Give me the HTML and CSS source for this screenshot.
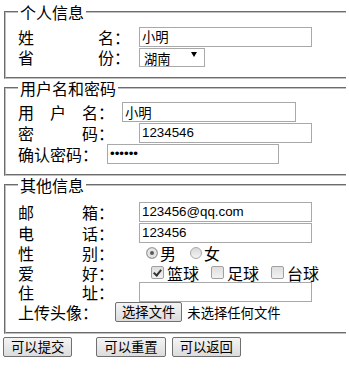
FILE: index.html
```html
<!DOCTYPE html>
<html lang="zh-CN">
<head>
  <meta charset="UTF-8" />
  <meta name="viewport" content="width=device-width, initial-scale=1.0"/>
  <title>用户注册</title>
  <link rel="stylesheet" href="styles.css">
</head>
<body>
  <form>
    <fieldset class="box box-one">
      <legend>个人信息</legend>
      <div class="row r21">
        <span class="head"><span class="key w96">姓名</span>：</span>
        <input class="txt" type="text" value="小明">
      </div>
      <div class="row r20">
        <span class="head"><span class="key w96">省份</span>：</span>
        <span class="sel">
          <select>
            <option>湖南</option>
            <option>湖北</option>
            <option>广东</option>
          </select>
        </span>
      </div>
    </fieldset>

    <fieldset class="box box-two">
      <legend>用户名和密码</legend>
      <div class="row r20">
        <span class="head head-user"><span class="key w80">用户名</span>：</span>
        <input class="txt txt-user" type="text" value="小明">
      </div>
      <div class="row r21">
        <span class="head"><span class="key w80">密码</span>：</span>
        <input class="txt" type="text" value="1234546">
      </div>
      <div class="row r21">
        <span class="head head-confirm"><span class="key">确认密码</span>：</span>
        <input class="txt txt-confirm" type="password" value="123456">
      </div>
    </fieldset>

    <fieldset class="box box-three">
      <legend>其他信息</legend>
      <div class="row r21">
        <span class="head"><span class="key w80">邮箱</span>：</span>
        <input class="txt" type="text" value="123456@qq.com">
      </div>
      <div class="row r21">
        <span class="head"><span class="key w80">电话</span>：</span>
        <input class="txt" type="text" value="123456">
      </div>
      <div class="row r20">
        <span class="head head-sex"><span class="key w80">性别</span>：</span>
        <label class="opt opt-radio"><input class="radio" type="radio" name="sex" checked>男</label>
        <label class="opt opt-radio"><input class="radio" type="radio" name="sex">女</label>
      </div>
      <div class="row r19">
        <span class="head head-hobby"><span class="key w80">爱好</span>：</span>
        <label class="opt opt-check"><input class="check" type="checkbox" checked>篮球</label>
        <label class="opt opt-check"><input class="check" type="checkbox">足球</label>
        <label class="opt opt-check"><input class="check" type="checkbox">台球</label>
      </div>
      <div class="row r20">
        <span class="head"><span class="key w80">住址</span>：</span>
        <input class="txt" type="text" value="">
      </div>
      <div class="row r20">
        <span class="head head-file"><span class="key">上传头像</span>：</span>
        <button class="btn btn-file" type="button">选择文件</button>
        <span class="nofile">未选择任何文件</span>
      </div>
    </fieldset>

    <div class="actions">
      <button class="btn" type="submit">可以提交</button>
      <button class="btn btn-reset" type="reset">可以重置</button>
      <button class="btn btn-back" type="button">可以返回</button>
    </div>
  </form>
</body>
</html>
```

FILE: styles.css
```css
html,
body {
  overflow-x: hidden;
}
body {
  margin: 3px 3px 0;
  background: #fff;
  color: #000;
  font-family: "Noto Sans CJK SC", sans-serif;
  font-size: 16px;
}
.box {
  width: 420px;
  margin: 0 1px;
  padding: 5px 12px 10px;
  border: 2px groove #c0c0c0;
}
.box-three {
  padding-top: 7px;
}
legend {
  padding: 0 2px;
  line-height: 18px;
}
.row {
  display: flex;
  align-items: center;
  white-space: nowrap;
}
.r19 { height: 19px; }
.r20 { height: 20px; }
.r21 { height: 21px; }
.head {
  display: inline-block;
  width: 121px;
  line-height: 18px;
}
.head-user { width: 104px; }
.head-confirm { width: 89px; }
.head-sex { width: 128px; }
.head-hobby { width: 133px; }
.head-file { width: 97px; }
.key {
  display: inline-block;
  text-align-last: justify;
}
.w96 { width: 96px; }
.w80 { width: 80px; }
.txt {
  box-sizing: border-box;
  width: 173px;
  height: 20px;
  margin: 0;
  padding: 0 2px;
  border: 1px solid #a9a9a9;
  font: 13.33px "Liberation Sans", "Noto Sans CJK SC", sans-serif;
  color: #000;
  outline: none;
}
.txt-user { width: 174px; }
.txt-confirm { width: 172px; }
.sel {
  position: relative;
  display: inline-block;
}
.sel select {
  appearance: none;
  box-sizing: border-box;
  width: 66px;
  height: 19px;
  margin: 0;
  padding: 0 0 0 4px;
  border: 1px solid #a9a9a9;
  border-radius: 0;
  background: #fff;
  font: 13.33px "Noto Sans CJK SC", sans-serif;
  color: #000;
}
.sel::after {
  content: "";
  position: absolute;
  right: 8px;
  top: 7px;
  border-left: 3.5px solid transparent;
  border-right: 3.5px solid transparent;
  border-top: 5px solid #000;
  pointer-events: none;
}
.opt {
  display: inline-flex;
  align-items: center;
  line-height: 18px;
}
.opt-radio + .opt-radio { margin-left: 14px; }
.opt-check + .opt-check { margin-left: 12px; }
.radio {
  appearance: none;
  box-sizing: border-box;
  width: 12px;
  height: 12px;
  margin: 0 2px 0 0;
  border: 1px solid #a8a8a8;
  border-radius: 50%;
  background: linear-gradient(#d8d8d8, #f4f4f4);
}
.radio:checked {
  background: #5a5a5a;
  box-shadow: inset 0 0 0 3px #e4e4e4;
}
.check {
  appearance: none;
  box-sizing: border-box;
  width: 13px;
  height: 13px;
  margin: 0 3px 0 0;
  border: 1px solid #a0a0a0;
  border-radius: 2px;
  background: linear-gradient(#dedede, #f2f2f2);
}
.check:checked::after {
  content: "";
  display: block;
  width: 3px;
  height: 6px;
  margin: 1px 0 0 3px;
  border: solid #333;
  border-width: 0 2px 2px 0;
  transform: rotate(40deg);
}
.btn {
  box-sizing: border-box;
  height: 20px;
  margin: 0;
  padding: 0 7px;
  border: 1px solid #707070;
  border-radius: 2px;
  background: linear-gradient(#f4f4f4, #dcdcdc);
  font: 13.33px "Noto Sans CJK SC", sans-serif;
  line-height: 18px;
  color: #000;
}
.btn-file {
  padding: 0 6px;
}
.nofile {
  margin-left: 5px;
  font-size: 13.33px;
}
.actions {
  display: flex;
  margin-top: 3px;
}
.btn-reset { margin-left: 24px; }
.btn-back { margin-left: 6px; }
```
